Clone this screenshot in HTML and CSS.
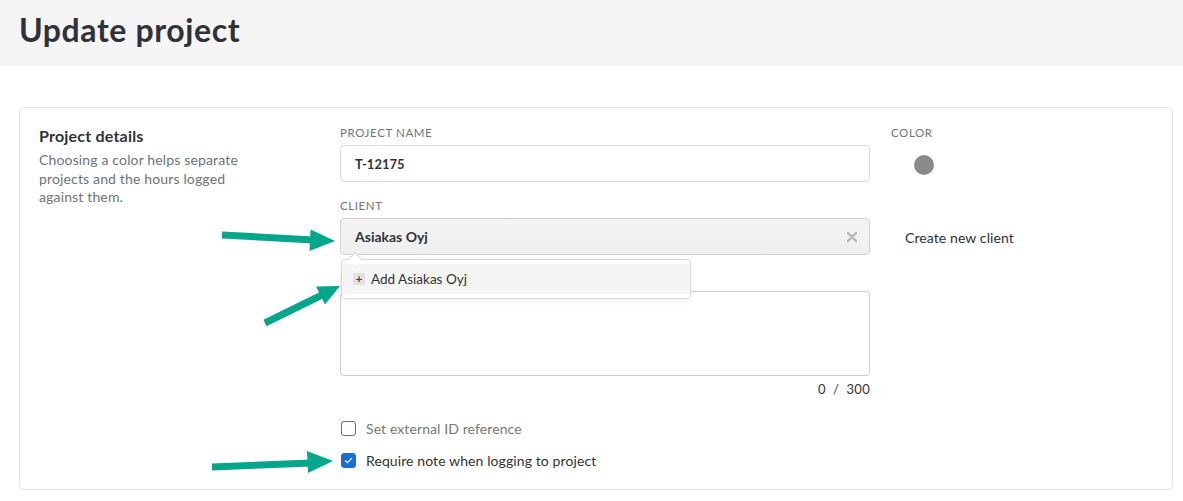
FILE: index.html
```html
<!DOCTYPE html>
<html lang="en">
<head>
<meta charset="utf-8">
<title>Update project</title>
<link rel="stylesheet" href="styles.css">
</head>
<body>
<header class="page-header">
  <h1 class="page-title">Update project</h1>
</header>
<main class="content">
  <section class="card">
    <div class="intro">
      <h2 class="intro-title">Project details</h2>
      <p class="intro-text">Choosing a color helps separate projects and the hours logged against them.</p>
    </div>
    <div class="form">
      <div class="field">
        <label class="label">Project name</label>
        <div class="input">T-12175</div>
      </div>
      <div class="field client-field">
        <label class="label">Client</label>
        <div class="select">
          <span class="select-value">Asiakas Oyj</span>
          <svg class="select-clear" viewBox="0 0 10 10" width="10" height="10"><path d="M1 1L9 9M9 1L1 9" stroke="#b3b3b3" stroke-width="2.2" stroke-linecap="round"/></svg>
        </div>
        <div class="dropdown">
          <span class="caret"></span>
          <div class="dropdown-item">
            <span class="plus">+</span>
            <span>Add Asiakas Oyj</span>
          </div>
        </div>
      </div>
      <div class="field">
        <label class="label">Notes</label>
        <div class="textarea"></div>
        <div class="counter">0&nbsp;&nbsp;/&nbsp;&nbsp;300</div>
      </div>
      <div class="checks">
        <div class="check-row muted">
          <span class="box"></span>
          <span>Set external ID reference</span>
        </div>
        <div class="check-row">
          <span class="box checked">
            <svg viewBox="0 0 16 16" width="11" height="11"><path d="M3.5 8.3l3 2.8 6-6.2" fill="none" stroke="#fff" stroke-width="1.8" stroke-linecap="round" stroke-linejoin="round"/></svg>
          </span>
          <span>Require note when logging to project</span>
        </div>
      </div>
    </div>
    <div class="side">
      <label class="label">Color</label>
      <span class="swatch"></span>
      <a class="create-link">Create new client</a>
    </div>
  </section>
</main>
<svg class="annotations" width="1183" height="501" viewBox="0 0 1183 501">
  <g fill="#06a68d" stroke="#06a68d">
    <line x1="222" y1="235" x2="313" y2="240" stroke-width="7"/>
    <polygon points="335,241 310.5,229.5 309.5,251" stroke="none"/>
    <line x1="265" y1="323" x2="322" y2="295" stroke-width="7"/>
    <polygon points="340,286 316,286.5 325,304.5" stroke="none"/>
    <line x1="212" y1="467" x2="311" y2="463" stroke-width="7"/>
    <polygon points="333,461 307,451 308,473" stroke="none"/>
  </g>
</svg>
</body>
</html>
```
FILE: styles.css
```css
* { box-sizing: border-box; }
html, body { margin: 0; padding: 0; }
body {
  font-family: Lato, "Liberation Sans", sans-serif;
  color: #2f3238;
  background: #fff;
  width: 1183px;
  height: 501px;
  overflow: hidden;
  position: relative;
}
.page-header {
  background: #f5f5f5;
  height: 66px;
  padding: 10px 19px 0;
}
.page-title {
  margin: 0;
  font-size: 32px;
  line-height: 40px;
  font-weight: 700;
  color: #2f3238;
  letter-spacing: 0.6px;
}
.content {
  padding: 41px 10px 0 19px;
}
.card {
  border: 1px solid #e4e4e4;
  border-radius: 4px;
  display: grid;
  grid-template-columns: 280px 530px 1fr;
  column-gap: 21px;
  padding: 18px 20px 17px 19px;
  height: 383px;
}
.intro-title {
  margin: 0;
  font-size: 16px;
  line-height: 20px;
  font-weight: 700;
  color: #2f3238;
  letter-spacing: 0.2px;
}
.intro-text {
  margin: 5px 0 0;
  width: 230px;
  font-size: 14px;
  line-height: 18.5px;
  color: #6e737b;
  letter-spacing: 0.15px;
}
.form { display: flex; flex-direction: column; }
.field { position: relative; margin-bottom: 17px; }
.label {
  display: block;
  font-size: 11.5px;
  line-height: 14px;
  letter-spacing: 0.6px;
  text-transform: uppercase;
  color: #72757a;
  margin-bottom: 5px;
}
.input {
  height: 37px;
  border: 1px solid #dcdcdc;
  border-radius: 4px;
  padding: 0 14px;
  display: flex;
  align-items: center;
  font-size: 13px;
  font-weight: 700;
  color: #2f3238;
}
.select {
  height: 37px;
  border: 1px solid #cfcfcf;
  border-radius: 4px;
  background: linear-gradient(#f4f4f4, #efefef);
  padding: 0 12px 0 14px;
  display: flex;
  align-items: center;
  justify-content: space-between;
}
.select-value { font-size: 14px; font-weight: 700; color: #2f3238; }
.select-clear { display: block; }
.dropdown {
  position: absolute;
  left: 1px;
  top: 60px;
  width: 350px;
  height: 40px;
  background: #fff;
  border: 1px solid #d8d8d8;
  border-radius: 4px;
  box-shadow: 0 2px 6px rgba(0,0,0,0.06);
  padding: 4px 0;
  z-index: 2;
}
.caret {
  position: absolute;
  left: 8px;
  top: -6px;
  width: 10px;
  height: 10px;
  background: #fff;
  border-left: 1px solid #d4d4d4;
  border-top: 1px solid #d4d4d4;
  transform: rotate(45deg);
}
.dropdown-item {
  height: 30px;
  background: #f5f5f5;
  display: flex;
  align-items: center;
  gap: 6px;
  padding-left: 11px;
  font-size: 13.5px;
  color: #333;
}
.plus {
  width: 12px;
  height: 12px;
  background: #e2e2e2;
  border-radius: 2px;
  font-size: 12px;
  line-height: 12px;
  text-align: center;
  font-weight: 700;
  color: #444;
}
.textarea {
  height: 85px;
  border: 1px solid #cccccc;
  border-radius: 4px;
}
.counter {
  margin-top: 5px;
  text-align: right;
  font-size: 13px;
  line-height: 16px;
  color: #333;
  letter-spacing: 0.3px;
}
.checks {
  margin-top: 4px;
  display: flex;
  flex-direction: column;
  gap: 12px;
}
.check-row {
  height: 20px;
  display: flex;
  align-items: center;
  gap: 10px;
  padding-left: 1px;
  font-size: 14px;
  color: #333;
  letter-spacing: 0.1px;
}
.check-row.muted { color: #777; }
.box {
  width: 15px;
  height: 15px;
  border: 1px solid #6b6b6b;
  border-radius: 3px;
  display: flex;
  align-items: center;
  justify-content: center;
}
.box.checked { background: #1a70cc; border-color: #1a70cc; }
.side { display: flex; flex-direction: column; align-items: flex-start; }
.swatch {
  width: 20px;
  height: 20px;
  border-radius: 50%;
  background: #8a8a8a;
  margin: 10px 0 0 23px;
}
.create-link {
  margin: 55px 0 0 14px;
  font-size: 14px;
  line-height: 16px;
  color: #2f3238;
  letter-spacing: 0.1px;
}
.annotations {
  position: absolute;
  left: 0;
  top: 0;
  pointer-events: none;
  z-index: 5;
}
```
